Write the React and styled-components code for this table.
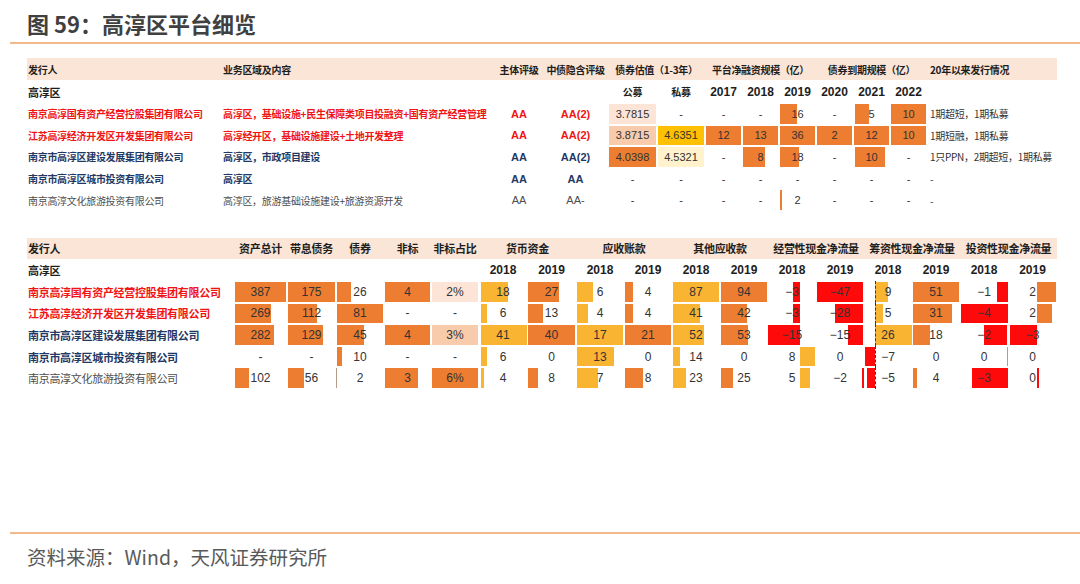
import React from "react";
import styled, { createGlobalStyle } from "styled-components";

const CJK = `"Noto Sans CJK SC", "Noto Sans", sans-serif`;
const NUM = `"Liberation Sans Narrow", "Liberation Sans", "Noto Sans CJK SC", sans-serif`;

const TONE = {
  red: "#f01414",
  navy: "#1f3864",
  gray: "#4d4d4d",
};

const FILL = {
  orange: "#ed7d31",
  gold: "#f9b431",
  red: "#ff0a0a",
  peach: "#fce4d6",
  salmon: "#f8cbad",
  amber: "#ffc000",
  cream: "#fff2cc",
  line: "#b89a8a",
};

const TOP_COLS = "195px 273px 48px 65px 49px 48px repeat(6, 37px) 130px";
const BOTTOM_COLS =
  "207px 53px 49px 48px 47px 48px 48px 49px 48px 48px 48px 48px 48px 48px 48px 48px 48px 49px";

// value with a data bar: x / width in px inside the cell
const b = (v, x, w, fill) => ({ v, bar: [x, w, fill] });

const TOP_HEAD = [
  { t: "发行人", align: "left" },
  { t: "业务区域及内容", align: "left" },
  { t: "主体评级" },
  { t: "中债隐含评级" },
  { t: "债券估值（1-3年）", span: 2 },
  { t: "平台净融资规模（亿）", span: 3 },
  { t: "债券到期规模（亿）", span: 3 },
  { t: "20年以来发行情况", align: "left", pad: 3 },
];

const TOP_SUB = ["公募", "私募", "2017", "2018", "2019", "2020", "2021", "2022"];

const TOP_ROWS = [
  {
    name: "南京高淳国有资产经营控股集团有限公司",
    biz: "高淳区，基础设施+民生保障类项目投融资+国有资产经营管理",
    tone: "red",
    rating: "AA",
    implied: "AA(2)",
    values: [b("3.7815", 1, 47, "peach"), "-", "-", "-", b("16", 1, 17, "orange"), "-", b("5", 2, 14, "orange"), b("10", 1, 35, "orange")],
    note: "1期超短，1期私募",
  },
  {
    name: "江苏高淳经济开发区开发集团有限公司",
    biz: "高淳经开区，基础设施建设+土地开发整理",
    tone: "red",
    rating: "AA",
    implied: "AA(2)",
    values: [
      b("3.8715", 1, 47, "salmon"),
      b("4.6351", 1, 46, "amber"),
      b("12", 1, 35, "orange"),
      b("13", 1, 35, "orange"),
      b("36", 1, 35, "orange"),
      b("2", 1, 35, "orange"),
      b("12", 1, 35, "orange"),
      b("10", 1, 35, "orange"),
    ],
    note: "1期短融，1期私募",
  },
  {
    name: "南京市高淳区建设发展集团有限公司",
    biz: "高淳区，市政项目建设",
    tone: "navy",
    rating: "AA",
    implied: "AA(2)",
    values: [b("4.0398", 1, 47, "orange"), b("4.5321", 1, 46, "cream"), "-", b("8", 1, 22, "orange"), b("18", 1, 19, "orange"), "-", b("10", 2, 30, "orange"), "-"],
    note: "1只PPN，2期超短，1期私募",
  },
  {
    name: "南京市高淳区城市投资有限公司",
    biz: "高淳区",
    tone: "navy",
    rating: "AA",
    implied: "AA",
    values: ["-", "-", "-", "-", "-", "-", "-", "-"],
    note: "-",
  },
  {
    name: "南京高淳文化旅游投资有限公司",
    biz: "高淳区，旅游基础设施建设+旅游资源开发",
    tone: "gray",
    light: true,
    rating: "AA",
    implied: "AA-",
    values: ["-", "-", "-", "-", b("2", 1, 1.5, "orange"), "-", "-", "-"],
    note: "-",
  },
];

const BOTTOM_HEAD = [
  { t: "发行人", align: "left" },
  { t: "资产总计" },
  { t: "带息债务" },
  { t: "债券" },
  { t: "非标" },
  { t: "非标占比" },
  { t: "货币资金", span: 2 },
  { t: "应收账款", span: 2 },
  { t: "其他应收款", span: 2 },
  { t: "经营性现金净流量", span: 2 },
  { t: "筹资性现金净流量", span: 2 },
  { t: "投资性现金净流量", span: 2 },
];

// 筹资性现金净流量 2018 carries the dashed zero axis
const AXIS_COL = 13;

const BOTTOM_ROWS = [
  {
    name: "南京高淳国有资产经营控股集团有限公司",
    tone: "red",
    values: [
      b("387", 1, 51, "orange"),
      b("175", 1, 47, "orange"),
      b("26", 1, 14, "orange"),
      b("4", 1, 45, "orange"),
      b("2%", 1, 46, "peach"),
      b("18", 2, 27, "gold"),
      b("27", 1, 31, "orange"),
      b("6", 1, 16, "gold"),
      b("4", 1, 8, "orange"),
      b("87", 1, 46, "gold"),
      b("94", 1, 46, "orange"),
      b("−3", 25, 7, "red"),
      b("−47", 1, 46, "red"),
      b("9", 11, 13, "gold"),
      b("51", 1, 46, "orange"),
      b("−1", 37, 11, "red"),
      b("2", 29, 19, "orange"),
    ],
  },
  {
    name: "江苏高淳经济开发区开发集团有限公司",
    tone: "red",
    values: [
      b("269", 1, 36, "orange"),
      b("112", 1, 29, "orange"),
      b("81", 1, 46, "orange"),
      "-",
      "-",
      b("6", 2, 6, "gold"),
      b("13", 1, 15, "orange"),
      b("4", 1, 11, "gold"),
      b("4", 1, 8, "orange"),
      b("41", 1, 27, "gold"),
      b("42", 1, 26, "orange"),
      b("−3", 25, 7, "red"),
      b("−28", 19, 28, "red"),
      b("5", 11, 8, "gold"),
      b("31", 1, 39, "orange"),
      b("−4", 1, 47, "red"),
      b("2", 29, 15, "orange"),
    ],
  },
  {
    name: "南京市高淳区建设发展集团有限公司",
    tone: "navy",
    values: [
      b("282", 1, 39, "orange"),
      b("129", 1, 35, "orange"),
      b("45", 1, 27, "orange"),
      b("4", 1, 45, "orange"),
      b("3%", 1, 46, "salmon"),
      b("41", 2, 46, "gold"),
      b("40", 1, 47, "orange"),
      b("17", 1, 46, "gold"),
      b("21", 1, 46, "orange"),
      b("52", 1, 31, "gold"),
      b("53", 1, 27, "orange"),
      b("−15", 0, 32, "red"),
      b("−15", 32, 15, "red"),
      b("26", 11, 37, "gold"),
      b("18", 1, 17, "orange"),
      b("−2", 24, 23, "red"),
      b("−3", 2, 27, "red"),
    ],
  },
  {
    name: "南京市高淳区城市投资有限公司",
    tone: "navy",
    values: [
      "-",
      "-",
      b("10", 1, 5, "orange"),
      "-",
      "-",
      b("6", 2, 6, "gold"),
      "0",
      b("13", 1, 37, "gold"),
      "0",
      b("14", 1, 7, "gold"),
      "0",
      b("8", 32, 15, "gold"),
      "0",
      b("−7", 1, 10, "red"),
      "0",
      b("0", 47, 1, "line"),
      "0",
    ],
  },
  {
    name: "南京高淳文化旅游投资有限公司",
    tone: "gray",
    light: true,
    values: [
      b("102", 1, 14, "orange"),
      b("56", 1, 16, "orange"),
      b("2", 0, 1, "line"),
      b("3", 1, 33, "orange"),
      b("6%", 1, 46, "orange"),
      b("4", 2, 3, "gold"),
      b("8", 1, 10, "orange"),
      b("7", 1, 21, "gold"),
      b("8", 1, 18, "orange"),
      b("23", 1, 13, "gold"),
      b("25", 1, 12, "orange"),
      b("5", 32, 10, "gold"),
      b("−2", 46, 2, "red"),
      b("−5", 3, 8, "red"),
      b("4", 1, 4, "orange"),
      b("−3", 12, 36, "red"),
      b("0", 29, 1.5, "red"),
    ],
  },
];

const GlobalStyle = createGlobalStyle`
  html, body {
    margin: 0;
    padding: 0;
    background: #ffffff;
  }
`;

const Page = styled.div`
  width: 1080px;
  height: 584px;
  display: flex;
  flex-direction: column;
  background: #ffffff;
  overflow: hidden;
`;

const Title = styled.h1`
  margin: 0 0 0 10px;
  padding: 9px 0 5px 17px;
  line-height: 28px;
  font-family: ${CJK};
  font-size: 22px;
  font-weight: 700;
  color: #404040;
  border-bottom: 2px solid #f4b98a;
`;

const Tables = styled.div`
  display: flex;
  flex-direction: column;
  gap: 27px;
  padding: 14px 0 0 27px;
`;

const Grid = styled.div`
  display: grid;
  grid-template-columns: ${(p) => p.$cols};
  width: 1030px;
`;

const HeadCell = styled.div`
  grid-column: span ${(p) => p.$span || 1};
  height: ${(p) => p.$h}px;
  display: flex;
  align-items: center;
  justify-content: ${(p) => (p.$align === "left" ? "flex-start" : "center")};
  padding-left: ${(p) => (p.$align === "left" ? p.$pad || 1 : 0)}px;
  background: ${(p) => (p.$band ? "#fbe5d6" : "transparent")};
  font-family: ${CJK};
  font-size: ${(p) => p.$size}px;
  font-weight: 700;
  letter-spacing: -0.3px;
  color: #1e1e1e;
  white-space: nowrap;
`;

const YearCell = styled(HeadCell)`
  font-family: ${NUM};
  letter-spacing: 0;
`;

const Cell = styled.div`
  position: relative;
  height: 21.6px;
  display: flex;
  align-items: center;
  justify-content: ${(p) => (p.$align === "left" ? "flex-start" : "center")};
  padding-left: ${(p) => (p.$align === "left" ? p.$pad || 1 : 0)}px;
  font-family: ${(p) => (p.$num ? NUM : CJK)};
  font-size: ${(p) => p.$size}px;
  font-weight: ${(p) => (p.$bold ? 700 : 400)};
  letter-spacing: ${(p) => (p.$num ? 0 : -0.3)}px;
  color: ${(p) => (p.$tone ? TONE[p.$tone] : "#333333")};
  white-space: nowrap;
`;

const Bar = styled.span`
  position: absolute;
  top: 1px;
  bottom: 1px;
  background: ${(p) => FILL[p.$fill]};
`;

const Axis = styled.span`
  position: absolute;
  top: 0;
  bottom: 0;
  left: 11px;
  border-left: 1px dashed #3a3a3a;
`;

const Label = styled.span`
  position: relative;
`;

const Footer = styled.footer`
  margin: auto 0 0 10px;
  padding: 10px 0 14px 17px;
  line-height: 26px;
  border-top: 2px solid #f4b98a;
  font-family: ${CJK};
  font-size: 19.5px;
  color: #595959;
`;

const Value = ({ item, size, axis }) => {
  const data = typeof item === "string" ? { v: item } : item;
  return (
    <Cell $num $size={size}>
      {data.bar && (
        <Bar
          $fill={data.bar[2]}
          style={{ left: data.bar[0], width: data.bar[1] }}
        />
      )}
      {axis && <Axis />}
      <Label>{data.v}</Label>
    </Cell>
  );
};

const Heads = ({ items, size, h }) =>
  items.map((it) => (
    <HeadCell
      key={it.t}
      $band
      $h={h}
      $size={size}
      $span={it.span}
      $align={it.align}
      $pad={it.pad}
    >
      {it.t}
    </HeadCell>
  ));

const TopTable = () => (
  <Grid $cols={TOP_COLS}>
    <Heads items={TOP_HEAD} size={10} h={22} />

    <HeadCell $h={23} $size={11} $align="left">
      高淳区
    </HeadCell>
    <HeadCell $h={23} $size={10} />
    <HeadCell $h={23} $size={10} />
    <HeadCell $h={23} $size={10} />
    {TOP_SUB.map((t) =>
      /^\d+$/.test(t) ? (
        <YearCell key={t} $h={23} $size={12}>
          {t}
        </YearCell>
      ) : (
        <HeadCell key={t} $h={23} $size={10}>
          {t}
        </HeadCell>
      )
    )}
    <HeadCell $h={23} $size={10} />

    {TOP_ROWS.map((row) => (
      <React.Fragment key={row.name}>
        <Cell $align="left" $size={10} $tone={row.tone} $bold={!row.light}>
          {row.name}
        </Cell>
        <Cell $align="left" $size={10} $tone={row.tone} $bold={!row.light}>
          {row.biz}
        </Cell>
        <Cell $num $size={11} $tone={row.tone} $bold={!row.light}>
          {row.rating}
        </Cell>
        <Cell $num $size={11} $tone={row.tone} $bold={!row.light}>
          {row.implied}
        </Cell>
        {row.values.map((v, i) => (
          <Value key={i} item={v} size={11} />
        ))}
        <Cell $align="left" $pad={3} $size={10}>
          {row.note}
        </Cell>
      </React.Fragment>
    ))}
  </Grid>
);

const BottomTable = () => (
  <Grid $cols={BOTTOM_COLS}>
    <Heads items={BOTTOM_HEAD} size={11} h={21} />

    <HeadCell $h={22} $size={11} $align="left">
      高淳区
    </HeadCell>
    {[0, 1, 2, 3, 4].map((i) => (
      <HeadCell key={"e" + i} $h={22} $size={11} />
    ))}
    {[0, 1, 2, 3, 4, 5].map((i) => (
      <React.Fragment key={"y" + i}>
        <YearCell $h={22} $size={12}>
          2018
        </YearCell>
        <YearCell $h={22} $size={12}>
          2019
        </YearCell>
      </React.Fragment>
    ))}

    {BOTTOM_ROWS.map((row) => (
      <React.Fragment key={row.name}>
        <Cell $align="left" $size={11} $tone={row.tone} $bold={!row.light}>
          {row.name}
        </Cell>
        {row.values.map((v, i) => (
          <Value key={i} item={v} size={12} axis={i === AXIS_COL} />
        ))}
      </React.Fragment>
    ))}
  </Grid>
);

export default function App() {
  return (
    <>
      <GlobalStyle />
      <Page>
        <Title>图 59：高淳区平台细览</Title>
        <Tables>
          <TopTable />
          <BottomTable />
        </Tables>
        <Footer>资料来源：Wind，天风证券研究所</Footer>
      </Page>
    </>
  );
}
